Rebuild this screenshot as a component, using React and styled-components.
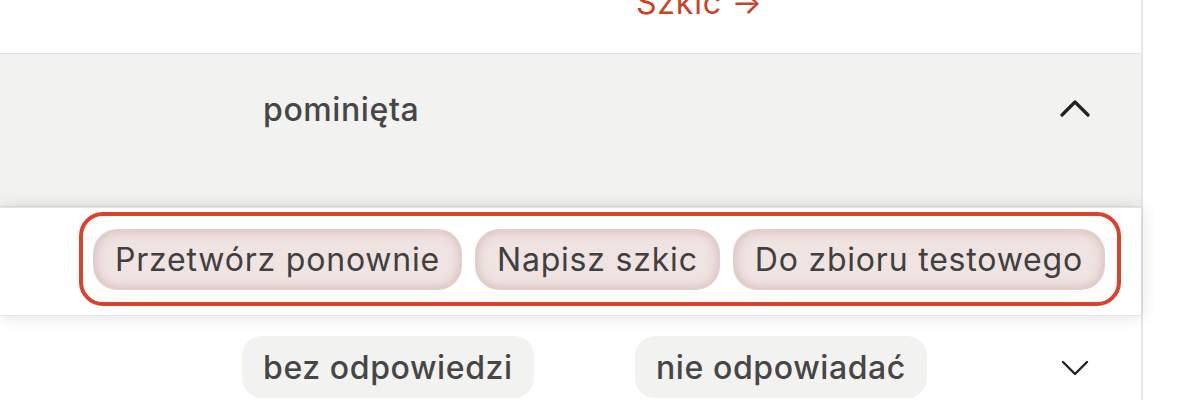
import styled, { createGlobalStyle } from "styled-components";

const GlobalStyle = createGlobalStyle`
  body {
    margin: 0;
    background: #ffffff;
    font-family: Inter, "Noto Sans", "Liberation Sans", sans-serif;
  }
`;

const Page = styled.div`
  width: 1200px;
  height: 400px;
  overflow: hidden;
  background: #ffffff;
`;

const Panel = styled.div`
  width: 1141px;
  border-right: 2px solid #e6e6e4;
  display: flex;
  flex-direction: column;
`;

const TopRow = styled.div`
  height: 53px;
  border-bottom: 1px solid #e4e4e2;
  padding-left: 636px;
  overflow: hidden;
`;

const DraftLink = styled.a`
  display: block;
  margin-top: -13px;
  font-size: 32px;
  line-height: 32px;
  letter-spacing: 0.8px;
  color: #c9432b;
  text-decoration: none;
`;

const Row = styled.div`
  display: grid;
  grid-template-columns: 393px 1fr 30px;
  align-items: start;
  padding: ${(p) => p.$pad} 51px 0 242px;
  height: ${(p) => p.$height};
  background: ${(p) => (p.$muted ? "#f2f2f0" : "#ffffff")};
  border-bottom: 1px solid #e4e4e2;
  box-sizing: border-box;
`;

const Chip = styled.span`
  justify-self: start;
  height: 62px;
  display: inline-flex;
  align-items: center;
  padding: 0 21px;
  border-radius: 20px;
  background: ${(p) => (p.$plain ? "transparent" : "#f2f2f0")};
  font-size: 32px;
  font-weight: 500;
  letter-spacing: 0.6px;
  color: #464646;
  white-space: nowrap;
`;

const Chevron = styled.svg`
  width: 30px;
  height: 62px;
  color: #222222;
`;

const ActionsRow = styled.div`
  position: relative;
  z-index: 1;
  height: 109px;
  background: #ffffff;
  border-top: 1px solid #e4e4e2;
  border-bottom: 1px solid #e4e4e2;
  box-sizing: border-box;
  padding: 4px 0 0 79px;
  box-shadow: 0 0 16px rgba(0, 0, 0, 0.13);
`;

const Highlight = styled.div`
  width: 1042px;
  height: 94px;
  box-sizing: border-box;
  border: 4.5px solid #d8432a;
  border-radius: 24px;
  padding: 13px 10px 0;
  display: flex;
  gap: 13px;
`;

const ActionButton = styled.button`
  height: 61px;
  padding: 0 21px;
  border: 1.5px solid #dcd3d1;
  border-radius: 24px;
  background: #efe4e2;
  box-shadow: inset 0 0 12px rgba(190, 130, 122, 0.5);
  font-family: inherit;
  font-size: 32px;
  font-weight: 400;
  letter-spacing: 0.8px;
  color: #404040;
  white-space: nowrap;
  cursor: pointer;
`;

const ChevronIcon = ({ up }) => (
  <Chevron viewBox="0 0 30 62">
    <polyline
      points={up ? "2,37 15,24 28,37" : "3,26 15,38 27,26"}
      fill="none"
      stroke="currentColor"
      strokeWidth={up ? 3.2 : 2.4}
      strokeLinecap="round"
      strokeLinejoin="round"
    />
  </Chevron>
);

const App = () => {
  const actions = ["Przetwórz ponownie", "Napisz szkic", "Do zbioru testowego"];

  return (
    <Page>
      <GlobalStyle />
      <Panel>
        <TopRow>
          <DraftLink href="#">Szkic →</DraftLink>
        </TopRow>
        <Row $muted $height="153px" $pad="24px">
          <Chip $plain>pominięta</Chip>
          <span />
          <ChevronIcon up />
        </Row>
        <ActionsRow>
          <Highlight>
            {actions.map((label) => (
              <ActionButton key={label}>{label}</ActionButton>
            ))}
          </Highlight>
        </ActionsRow>
        <Row $height="120px" $pad="20px">
          <Chip>bez odpowiedzi</Chip>
          <Chip>nie odpowiadać</Chip>
          <ChevronIcon />
        </Row>
      </Panel>
    </Page>
  );
};

export default App;
